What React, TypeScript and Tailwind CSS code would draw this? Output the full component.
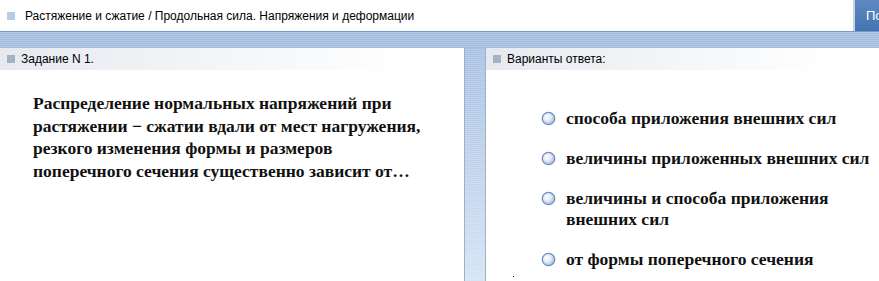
import React from "react";

const stripe =
  "bg-[repeating-linear-gradient(180deg,#b3c9e6_0px,#b3c9e6_1px,#a5bee0_1px,#a5bee0_2px)]";

function Radio() {
  return (
    <svg width="15" height="15" viewBox="0 0 15 15" className="shrink-0">
      <defs>
        <radialGradient id="rg" cx="0.4" cy="0.38" r="0.7">
          <stop offset="0" stopColor="#ffffff" />
          <stop offset="0.45" stopColor="#e4ecf6" />
          <stop offset="1" stopColor="#94aed2" />
        </radialGradient>
      </defs>
      <circle cx="7.5" cy="7.5" r="6.2" fill="url(#rg)" stroke="#6f8fbb" strokeWidth="1.3" />
    </svg>
  );
}

function Option({ children }: { children: React.ReactNode }) {
  return (
    <div className="flex items-start">
      <div className="w-[25px] h-[21px] flex items-center">
        <Radio />
      </div>
      <div className="leading-[21px]">{children}</div>
    </div>
  );
}

export default function App() {
  return (
    <div className="w-[879px] h-[281px] overflow-hidden bg-white flex flex-col font-['Liberation_Sans',Arial,sans-serif]">
      <div className="h-[31px] flex items-center shrink-0">
        <div className="w-[8px] h-[8px] bg-[#b9cbe2] ml-[7px]" />
        <div className="ml-[10px] text-[12px] text-black flex-1">
          Растяжение и сжатие / Продольная сила. Напряжения и деформации
        </div>
        <div className="w-[26px] h-full border-l-2 border-[#c9d3df] bg-[linear-gradient(180deg,#5e89c2,#4573b2)] text-white text-[13px] flex items-center pl-[11px] overflow-hidden whitespace-nowrap">
          По
        </div>
      </div>
      <div className={`h-[17px] shrink-0 border-t border-[#7399cc] ${stripe}`} />
      <div className="flex flex-1 min-h-0">
        <div className="w-[464px] flex flex-col">
          <div className="h-[22px] flex items-center bg-[linear-gradient(90deg,#e6eaef,#ffffff_88%)]">
            <div className="w-[8px] h-[8px] bg-[#a3b3c4] ml-[7px]" />
            <div className="ml-[6px] text-[12px] text-black">Задание N 1.</div>
          </div>
          <div className="mt-[22px] pl-[33px] font-['Liberation_Serif','Times_New_Roman',serif] text-[17.5px] font-bold leading-[22.5px] text-[#111]">
            Распределение нормальных напряжений при
            <br />
            растяжении − сжатии вдали от мест нагружения,
            <br />
            резкого изменения формы и размеров
            <br />
            поперечного сечения существенно зависит от…
          </div>
        </div>
        <div className="w-[22px] border-x border-[#9db1cc] bg-[linear-gradient(180deg,#a9c1e3,#d5e3f3)] relative">
          <div className="absolute inset-0 bg-[repeating-linear-gradient(180deg,rgba(255,255,255,0)_0px,rgba(255,255,255,0)_1px,rgba(255,255,255,0.18)_1px,rgba(255,255,255,0.18)_2px)]" />
        </div>
        <div className="flex-1 flex flex-col">
          <div className="h-[22px] flex items-center bg-[linear-gradient(90deg,#e6eaef,#ffffff_88%)]">
            <div className="w-[8px] h-[8px] bg-[#a3b3c4] ml-[7px]" />
            <div className="ml-[6px] text-[12px] text-black">Варианты ответа:</div>
          </div>
          <div className="mt-[38px] pl-[55px] flex flex-col gap-[19px] font-['Liberation_Serif','Times_New_Roman',serif] text-[17.5px] font-bold text-[#111]">
            <Option>способа приложения внешних сил</Option>
            <Option>величины приложенных внешних сил</Option>
            <Option>
              величины и способа приложения
              <br />
              внешних сил
            </Option>
            <Option>от формы поперечного сечения</Option>
          </div>
          <div className="ml-[27px] mt-[6px] w-[1px] h-[1px] bg-black" />
        </div>
      </div>
    </div>
  );
}
